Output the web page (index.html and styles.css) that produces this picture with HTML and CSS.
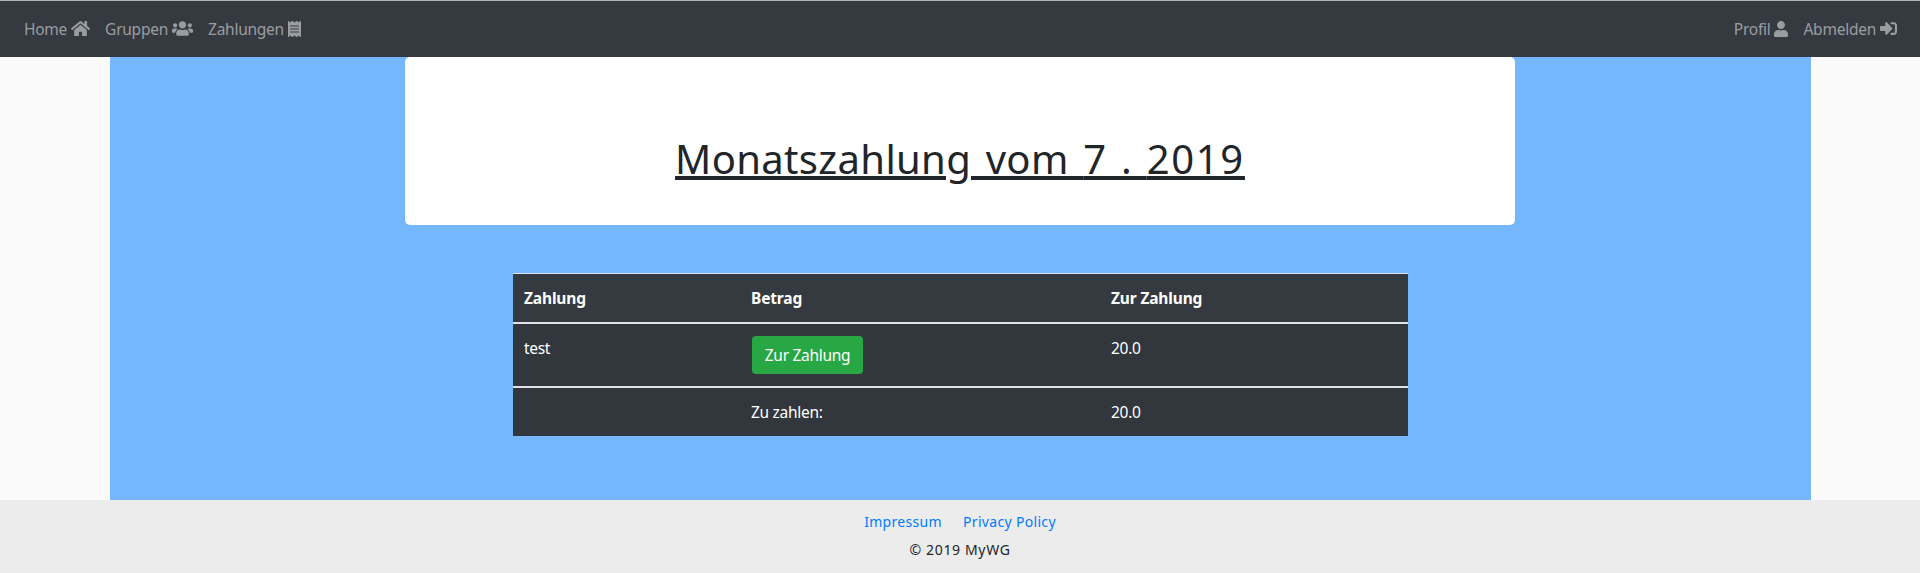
FILE: index.html
```html
<!DOCTYPE html>
<html lang="de">
<head>
<meta charset="utf-8">
<title>MyWG</title>
<link rel="stylesheet" href="styles.css">
</head>
<body>
<nav class="navbar">
  <div class="nav-group">
    <a class="nav-link"><span class="t-home">Home</span><svg class="icon" width="19" height="17" viewBox="0 0 576 512"><path d="M280.37 148.26L96 300.11V464a16 16 0 0 0 16 16l112.06-.29a16 16 0 0 0 15.92-16V368a16 16 0 0 1 16-16h64a16 16 0 0 1 16 16v95.64a16 16 0 0 0 16 16.05L464 480a16 16 0 0 0 16-16V300L295.67 148.26a12.19 12.19 0 0 0-15.3 0zM571.6 251.47L488 182.56V44.05a12 12 0 0 0-12-12h-56a12 12 0 0 0-12 12v72.61L318.47 43a48 48 0 0 0-61 0L4.34 251.47a12 12 0 0 0-1.6 16.9l25.5 31A12 12 0 0 0 45.15 301l235.22-193.74a12.19 12.19 0 0 1 15.3 0L530.9 301a12 12 0 0 0 16.9-1.6l25.5-31a12 12 0 0 0-1.7-16.93z"/></svg></a>
    <a class="nav-link"><span class="t-groups">Gruppen</span><svg class="icon" width="21" height="17" viewBox="0 0 640 512"><path d="M96 224c35.300 0 64-28.700 64-64s-28.700-64-64-64-64 28.700-64 64 28.700 64 64 64zm448 0c35.300 0 64-28.700 64-64s-28.700-64-64-64-64 28.700-64 64 28.700 64 64 64zm32 32h-64c-17.600 0-33.500 7.100-45.100 18.600 40.300 22.100 68.900 62 75.100 109.400h66c17.700 0 32-14.300 32-32v-32c0-35.300-28.700-64-64-64zm-256 0c61.900 0 112-50.100 112-112S381.900 32 320 32 208 82.100 208 144s50.100 112 112 112zm76.800 32h-8.300c-20.800 10-43.900 16-68.500 16s-47.600-6-68.500-16h-8.300C179.600 288 128 339.600 128 403.200V432c0 26.500 21.500 48 48 48h288c26.500 0 48-21.500 48-48v-28.800c0-63.600-51.600-115.200-115.200-115.200zm-223.700-13.400C161.500 263.100 145.600 256 128 256H64c-35.300 0-64 28.700-64 64v32c0 17.700 14.300 32 32 32h65.900c6.300-47.400 34.900-87.300 75.200-109.400z"/></svg></a>
    <a class="nav-link"><span class="t-payments">Zahlungen</span><svg class="icon" width="13" height="16" viewBox="0 0 384 512" preserveAspectRatio="none"><path d="M358.400 3.200L320 48 265.600 3.200a15.900 15.900 0 0 0-19.200 0L192 48 137.600 3.200a15.900 15.900 0 0 0-19.200 0L64 48 25.600 3.200C15-4.700 0 2.800 0 16v480c0 13.200 15 20.700 25.600 12.800L64 464l54.400 44.800a15.900 15.900 0 0 0 19.200 0L192 464l54.400 44.800a15.900 15.900 0 0 0 19.200 0L320 464l38.400 44.800c10.500 7.900 25.600.4 25.600-12.800V16c0-13.200-15-20.700-25.600-12.800zM320 360c0 4.400-3.600 8-8 8H72c-4.400 0-8-3.600-8-8v-16c0-4.400 3.600-8 8-8h240c4.400 0 8 3.600 8 8v16zm0-96c0 4.400-3.600 8-8 8H72c-4.400 0-8-3.600-8-8v-16c0-4.400 3.600-8 8-8h240c4.400 0 8 3.600 8 8v16zm0-96c0 4.400-3.600 8-8 8H72c-4.400 0-8-3.600-8-8v-16c0-4.400 3.600-8 8-8h240c4.400 0 8 3.600 8 8v16z"/></svg></a>
  </div>
  <div class="nav-group">
    <a class="nav-link"><span class="t-profile">Profil</span><svg class="icon" width="14" height="16" viewBox="0 0 448 512"><path d="M224 256c70.700 0 128-57.300 128-128S294.700 0 224 0 96 57.300 96 128s57.300 128 128 128zm89.600 32h-16.700c-22.200 10.200-46.900 16-72.900 16s-50.600-5.800-72.900-16h-16.700C60.200 288 0 348.200 0 422.400V464c0 26.500 21.500 48 48 48h352c26.500 0 48-21.500 48-48v-41.600c0-74.200-60.200-134.400-134.400-134.400z"/></svg></a>
    <a class="nav-link"><span class="t-logout">Abmelden</span><svg class="icon" width="17" height="17" viewBox="0 0 512 512"><path d="M416 448h-84c-6.600 0-12-5.400-12-12v-40c0-6.600 5.400-12 12-12h84c17.700 0 32-14.300 32-32V160c0-17.700-14.300-32-32-32h-84c-6.600 0-12-5.400-12-12V76c0-6.600 5.400-12 12-12h84c53 0 96 43 96 96v192c0 53-43 96-96 96zm-47-209L201 71c-15-15-41-4.500-41 17v96H24c-13.300 0-24 10.700-24 24v96c0 13.300 10.700 24 24 24h136v96c0 21.500 26 32 41 17l168-168c9.300-9.400 9.300-24.600 0-34z"/></svg></a>
  </div>
</nav>
<main class="container">
  <header class="title-card"><h1 class="title">Monatszahlung vom <span>7 </span><span>. </span><span class="year">2019</span></h1></header>
  <table class="payments">
    <colgroup><col class="col-name"><col class="col-amount"><col></colgroup>
    <thead><tr><th>Zahlung</th><th>Betrag</th><th>Zur Zahlung</th></tr></thead>
    <tbody>
      <tr class="row-payment"><td>test</td><td><a class="btn">Zur Zahlung</a></td><td>20.0</td></tr>
      <tr class="row-total"><td></td><td>Zu zahlen:</td><td>20.0</td></tr>
    </tbody>
  </table>
</main>
<footer class="footer">
  <div class="footer-links"><a>Impressum</a><a>Privacy Policy</a></div>
  <div class="copyright">© 2019 MyWG</div>
</footer>
</body>
</html>
```
FILE: styles.css
```css
* { box-sizing: border-box; }
body {
  margin: 0;
  height: 573px;
  overflow: hidden;
  display: flex;
  flex-direction: column;
  background: #fafafa;
  color: #212529;
  font: 15.5px/24px "Noto Sans", "Open Sans", sans-serif;
}
.navbar {
  height: 57px;
  flex: none;
  display: flex;
  justify-content: space-between;
  align-items: center;
  padding: 0 23px 1px 24px;
  border-top: 1px solid #b0b3b7;
  background: #343a40;
  color: #9a9da0;
}
.nav-group { display: flex; gap: 15px; }
.nav-link { display: flex; align-items: center; gap: 4px; }
.nav-link span { white-space: nowrap; letter-spacing: -0.25px; }
.icon { fill: currentColor; flex: none; }
.container {
  width: 1701px;
  height: 443px;
  margin-left: 110px;
  flex: none;
  display: flex;
  flex-direction: column;
  align-items: center;
  background: #74b7ff;
}
.title-card {
  width: 1110px;
  height: 168px;
  margin-right: 1px;
  padding-top: 78px;
  flex: none;
  border-radius: 5px;
  background: #fff;
  text-align: center;
}
.title {
  margin: 0;
  font-size: 40px;
  font-weight: 400;
  line-height: 48px;
  letter-spacing: 0.35px;
  word-spacing: 3.8px;
  text-decoration: underline;
  text-decoration-thickness: 4px;
  text-underline-offset: 2px;
}
.year { letter-spacing: 1.7px; }
.payments {
  width: 895px;
  margin-top: 48px;
  table-layout: fixed;
  border-collapse: separate;
  border-spacing: 0;
  color: #fff;
  background: #32363d;
  letter-spacing: -0.3px;
}
.col-name { width: 227px; }
.col-amount { width: 360px; }
.payments th, .payments td { padding: 12px 11px; text-align: left; vertical-align: top; }
.payments th {
  height: 51px;
  border-top: 1px solid #dee2e6;
  border-bottom: 2px solid #dee2e6;
  background: #343a40;
  letter-spacing: -0.15px;
}
.row-payment td { height: 64px; border-bottom: 2px solid #dee2e6; }
.row-total td { height: 48px; }
.btn {
  display: block;
  width: 111px;
  height: 38px;
  margin-left: 1px;
  line-height: 38px;
  border-radius: 4px;
  background: #28a745;
  text-align: center;
}
.footer {
  flex: 1;
  padding-top: 8px;
  background: #ececec;
  font-size: 14px;
  line-height: 28px;
  letter-spacing: 0.65px;
  text-align: center;
}
.footer-links { display: flex; justify-content: center; gap: 21px; color: #007bff; letter-spacing: 0.32px; }
.copyright { color: #212529; }
```
